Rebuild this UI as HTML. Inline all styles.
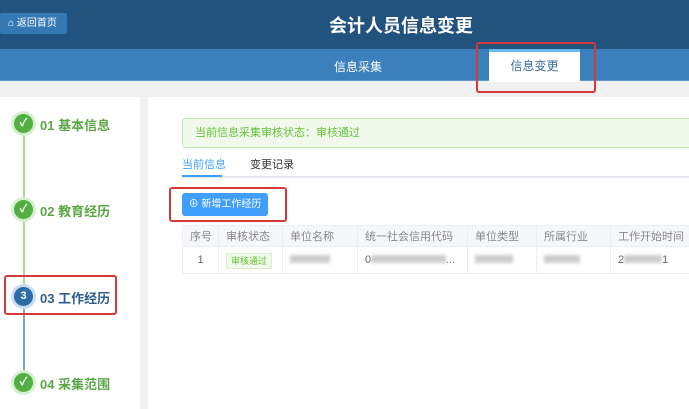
<!DOCTYPE html>
<html><head><meta charset="utf-8"><style>
*{margin:0;padding:0;box-sizing:border-box}
body{width:689px;height:409px;overflow:hidden;background:#f0f0f0;font-family:"Liberation Sans","Noto Sans CJK SC",sans-serif;position:relative}
.a{position:absolute}
.hd{left:0;top:0;width:689px;height:49px;background:#22527e}
.nav{left:0;top:49px;width:689px;height:32px;background:#3b7fbc;border-bottom:1px solid #5a9ad0}
.c{border-radius:50%;width:19px;height:19px;text-align:center;color:#fff;font-size:11px;line-height:19px;font-weight:bold}
.g{background:#52b043;box-shadow:0 0 0 3px #d6efce}
.lbl{font-size:13px;font-weight:bold;color:#5aa845}
td,th{border:1px solid #ebeef5;font-size:11px;color:#666;font-weight:normal;text-align:left;padding-left:7px;white-space:nowrap;overflow:hidden}
th{background:#f5f7fa;color:#888}
.bl{display:inline-block;background:#ccc;height:8px;filter:blur(1.5px)}
</style></head><body>
<div class="a hd"></div>
<div class="a" style="left:0;top:13px;width:67px;height:21px;background:#3478b4;border-radius:2px;color:#fff;font-size:10px;line-height:21px;padding-left:8px">⌂ 返回首页</div>
<div class="a" style="left:329px;top:12px;color:#fff;font-size:18px;font-weight:bold">会计人员信息变更</div>
<div class="a nav"></div>
<div class="a" style="left:334px;top:58px;color:#fff;font-size:12px">信息采集</div>
<div class="a" style="left:489px;top:49px;width:91px;height:33px;background:#fff;border-top:3px solid #6ab9ee;text-align:center;font-size:12px;color:#3a6d9e;line-height:28px">信息变更</div>
<div class="a" style="left:476px;top:42px;width:120px;height:51px;border:2px solid #d43a3a;border-radius:3px"></div>

<div class="a" style="left:0;top:97px;width:140px;height:312px;background:#fff"></div>
<div class="a" style="left:148px;top:97px;width:541px;height:312px;background:#fff"></div>

<div class="a" style="left:23px;top:124px;width:2px;height:173px;background:#a9d69b"></div>
<div class="a" style="left:23px;top:297px;width:2px;height:86px;background:#7fa3c8"></div>
<div class="a c g" style="left:14px;top:114px">✓</div><div class="a lbl" style="left:40px;top:115px">01 基本信息</div>
<div class="a c g" style="left:14px;top:200px">✓</div><div class="a lbl" style="left:40px;top:201px">02 教育经历</div>
<div class="a c" style="left:14px;top:287px;background:#2e6ca8;box-shadow:0 0 0 3px #c9def2">3</div><div class="a lbl" style="left:40px;top:288px;color:#2e5f8e">03 工作经历</div>
<div class="a c g" style="left:14px;top:373px">✓</div><div class="a lbl" style="left:40px;top:374px">04 采集范围</div>
<div class="a" style="left:4px;top:275px;width:113px;height:40px;border:2px solid #d43a3a;border-radius:3px"></div>

<div class="a" style="left:182px;top:118px;width:520px;height:30px;background:#f0f9eb;border:1px solid #c2e7b0;border-radius:3px;color:#67c23a;font-size:11px;line-height:28px;padding-left:12px">当前信息采集审核状态：审核通过</div>
<div class="a" style="left:182px;top:176px;width:507px;height:2px;background:#e4e7ed"></div>
<div class="a" style="left:182px;top:156px;font-size:11px;color:#409eff">当前信息</div>
<div class="a" style="left:182px;top:175px;width:40px;height:2px;background:#409eff"></div>
<div class="a" style="left:250px;top:156px;font-size:11px;color:#333">变更记录</div>
<div class="a" style="left:182px;top:193px;width:86px;height:23px;background:#409eff;border-radius:3px;color:#fff;font-size:10px;line-height:23px;text-align:center">⊕ 新增工作经历</div>
<div class="a" style="left:169px;top:187px;width:118px;height:35px;border:2px solid #d43a3a;border-radius:3px"></div>

<table class="a" style="left:182px;top:225px;border-collapse:collapse;table-layout:fixed;width:520px">
<colgroup><col style="width:36px"><col style="width:64px"><col style="width:75px"><col style="width:110px"><col style="width:69px"><col style="width:74px"><col style="width:92px"></colgroup>
<tr style="height:21px"><th>序号</th><th>审核状态</th><th>单位名称</th><th>统一社会信用代码</th><th>单位类型</th><th>所属行业</th><th>工作开始时间</th></tr>
<tr style="height:27px"><td style="text-align:center;padding:0">1</td><td><span style="background:#f0f9eb;border:1px solid #d8efc9;color:#67c23a;font-size:9px;padding:2px 4px">审核通过</span></td><td><span class="bl" style="width:40px"></span></td><td>0<span class="bl" style="width:75px"></span>...</td><td><span class="bl" style="width:38px"></span></td><td><span class="bl" style="width:36px"></span></td><td>2<span class="bl" style="width:38px"></span>1</td></tr>
</table>
</body></html>
